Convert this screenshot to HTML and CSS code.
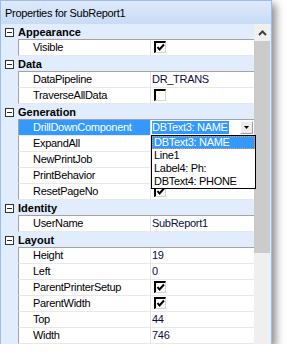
FILE: index.html
```html
<!DOCTYPE html>
<html lang="en">
<head>
  <meta charset="UTF-8">
  <title>Properties for SubReport1</title>
  <link rel="stylesheet" href="styles.css">
</head>
<body>
  <div class="window">
    <div class="titlebar">Properties for SubReport1</div>

    <div class="body">
      <div class="grid">
        <div class="cat"><span class="toggle"></span>Appearance</div>
        <div class="prop">
          <div class="gutter"></div>
          <div class="name">Visible</div>
          <div class="value"><span class="check on"></span></div>
        </div>

        <div class="cat"><span class="toggle"></span>Data</div>
        <div class="prop">
          <div class="gutter"></div>
          <div class="name">DataPipeline</div>
          <div class="value">DR_TRANS</div>
        </div>
        <div class="prop">
          <div class="gutter"></div>
          <div class="name">TraverseAllData</div>
          <div class="value"><span class="check"></span></div>
        </div>

        <div class="cat"><span class="toggle"></span>Generation</div>
        <div class="prop selected">
          <div class="gutter"></div>
          <div class="name">DrillDownComponent</div>
          <div class="value editor">
            <span class="sel-text">DBText3: NAME</span>
            <span class="drop-btn"></span>
            <ul class="dropdown">
              <li class="current">DBText3: NAME</li>
              <li>Line1</li>
              <li>Label4: Ph:</li>
              <li>DBText4: PHONE</li>
            </ul>
          </div>
        </div>
        <div class="prop">
          <div class="gutter"></div>
          <div class="name">ExpandAll</div>
          <div class="value"><span class="check"></span></div>
        </div>
        <div class="prop">
          <div class="gutter"></div>
          <div class="name">NewPrintJob</div>
          <div class="value"><span class="check"></span></div>
        </div>
        <div class="prop">
          <div class="gutter"></div>
          <div class="name">PrintBehavior</div>
          <div class="value"></div>
        </div>
        <div class="prop">
          <div class="gutter"></div>
          <div class="name">ResetPageNo</div>
          <div class="value"><span class="check on"></span></div>
        </div>

        <div class="cat"><span class="toggle"></span>Identity</div>
        <div class="prop">
          <div class="gutter"></div>
          <div class="name">UserName</div>
          <div class="value">SubReport1</div>
        </div>

        <div class="cat"><span class="toggle"></span>Layout</div>
        <div class="prop">
          <div class="gutter"></div>
          <div class="name">Height</div>
          <div class="value">19</div>
        </div>
        <div class="prop">
          <div class="gutter"></div>
          <div class="name">Left</div>
          <div class="value">0</div>
        </div>
        <div class="prop">
          <div class="gutter"></div>
          <div class="name">ParentPrinterSetup</div>
          <div class="value"><span class="check on"></span></div>
        </div>
        <div class="prop">
          <div class="gutter"></div>
          <div class="name">ParentWidth</div>
          <div class="value"><span class="check on"></span></div>
        </div>
        <div class="prop">
          <div class="gutter"></div>
          <div class="name">Top</div>
          <div class="value">44</div>
        </div>
        <div class="prop">
          <div class="gutter"></div>
          <div class="name">Width</div>
          <div class="value">746</div>
        </div>
      </div>

      <div class="scrollbar">
        <div class="arrow">
          <svg width="9" height="6" viewBox="0 0 9 6"><polyline points="1,5 4.5,1.5 8,5" fill="none" stroke="#404040" stroke-width="2"/></svg>
        </div>
        <div class="thumb"></div>
      </div>
    </div>
  </div>
</body>
</html>
```

FILE: styles.css
```css
body {
  margin: 0;
  background-color: #fff;
  font-family: "Liberation Sans", Arial, sans-serif;
  font-size: 11px;
  color: #000;
}
.window {
  width: 272px;
  box-sizing: border-box;
  border: 1px solid #9dbde6;
  border-bottom: none;
  background-color: #e1ecfc;
  box-shadow: 4px 4px 8px rgba(0,0,0,0.45);
}
.titlebar {
  height: 23px;
  line-height: 24px;
  padding-left: 4px;
  letter-spacing: -0.3px;
  background: linear-gradient(#dfeafb, #c8dbf6);
}
.body {
  display: flex;
}
.grid {
  width: 253px;
  background-color: #fff;
}
.scrollbar {
  width: 16px;
  margin-right: 1px;
  background-color: #efefef;
}
.arrow {
  height: 17px;
  display: flex;
  align-items: center;
  justify-content: center;
  background-color: #f0f0f0;
}
.thumb {
  height: 212px;
  background-color: #cbcbcb;
}

/* categories */
.cat {
  height: 16px;
  line-height: 16px;
  display: flex;
  align-items: center;
  font-weight: bold;
  background: linear-gradient(#a3a3a3, #a3a3a3) no-repeat 17px 100% / 100% 1px, #e1ecfc;
}
.toggle {
  width: 9px;
  height: 9px;
  box-sizing: border-box;
  margin: 0 4px 0 4px;
  border: 1px solid #303030;
  background: linear-gradient(#303030, #303030) no-repeat center / 5px 1px, #fff;
}

/* properties */
.prop {
  display: flex;
  height: 16px;
  line-height: 15px;
  letter-spacing: -0.3px;
}
.gutter {
  width: 17px;
  background-color: #e1ecfc;
}
.name {
  width: 117px;
  padding-left: 14px;
  border-left: 1px solid #a3a3a3;
  border-bottom: 1px solid #e8e8e8;
}
.value {
  flex: 1;
  position: relative;
  padding-left: 1px;
  border-left: 1px solid #e3e3e3;
  border-bottom: 1px solid #e8e8e8;
  color: #0c0c3a;
}
.check {
  display: block;
  width: 12px;
  height: 12px;
  box-sizing: border-box;
  margin: 1px 0 0 2px;
  border-top: 2px solid #000;
  border-left: 2px solid #000;
  border-right: 1px solid #d6d6d6;
  border-bottom: 1px solid #d6d6d6;
  background-color: #fff;
}
.check.on {
  background: url("data:image/svg+xml,%3Csvg xmlns='http://www.w3.org/2000/svg' width='9' height='9'%3E%3Cpolyline points='1.5,4 3.5,6.5 8,1.5' fill='none' stroke='black' stroke-width='2'/%3E%3C/svg%3E") no-repeat 0 0, #fff;
}

/* selected row with open combo */
.selected .name {
  background-color: #3399ff;
  color: #fff;
}
.editor {
  display: flex;
  align-items: center;
}
.sel-text {
  background-color: #3399ff;
  color: #fff;
  line-height: 13px;
  padding-right: 1px;
}
.drop-btn {
  width: 13px;
  height: 13px;
  box-sizing: border-box;
  margin-left: auto;
  margin-right: 1px;
  border: 1px solid #a0a0a0;
  border-top-color: #fff;
  border-left-color: #fff;
  background: url("data:image/svg+xml,%3Csvg xmlns='http://www.w3.org/2000/svg' width='5' height='3'%3E%3Cpolygon points='0,0 5,0 2.5,3' fill='black'/%3E%3C/svg%3E") no-repeat center, #ececec;
}
.dropdown {
  position: absolute;
  top: 15px;
  left: 0;
  width: 103px;
  margin: 0;
  padding: 0;
  list-style: none;
  border: 1px solid #000;
  background-color: #fff;
  color: #000;
  z-index: 2;
}
.dropdown li {
  height: 13px;
  line-height: 13px;
  padding-left: 2px;
}
.dropdown li.current {
  background-color: #3399ff;
  color: #fff;
  outline: 1px dotted #e0a050;
  outline-offset: -1px;
}
```
